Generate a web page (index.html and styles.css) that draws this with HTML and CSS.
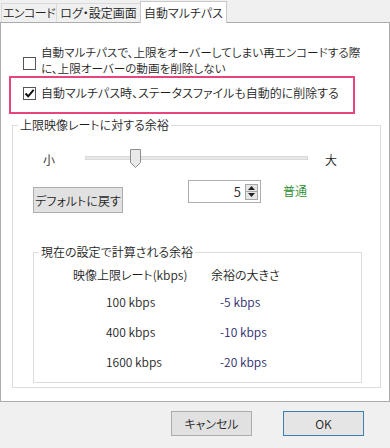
FILE: index.html
```html
<!DOCTYPE html>
<html lang="ja">
<head>
  <meta charset="UTF-8" />
  <title>自動マルチパス</title>
  <link rel="stylesheet" href="styles.css">
</head>
<body>
  <div class="window">
    <!-- Onglets -->
    <div class="tabs">
      <div class="tab tab-first">エンコード</div>
      <div class="tab tab-second">ログ・設定画面</div>
      <div class="tab tab-active">自動マルチパス</div>
    </div>

    <div class="panel">
      <div class="option option-multi">
        <span class="checkbox"></span>
        <span class="option-text">
          <span class="line">自動マルチパスで、上限をオーバーしてしまい再エンコードする際</span>
          <span class="line">に、上限オーバーの動画を削除しない</span>
        </span>
      </div>

      <div class="highlight">
        <div class="option">
          <span class="checkbox">
            <svg width="11" height="11" viewBox="0 0 11 11"><path d="M1.5 5.5 L4.2 8.3 L9.6 1.8" fill="none" stroke="#111" stroke-width="2"/></svg>
          </span>
          <span>自動マルチパス時、ステータスファイルも自動的に削除する</span>
        </div>
      </div>

      <fieldset class="group">
        <legend>上限映像レートに対する余裕</legend>

        <div class="slider-row">
          <span class="slider-label">小</span>
          <div class="slider-track">
            <svg class="slider-thumb" width="12" height="20" viewBox="0 0 12 20"><path d="M0.5 0.5 H10.5 V13.5 L5.5 18.5 L0.5 13.5 Z" fill="#e9e9e9" stroke="#8c8c8c"/></svg>
          </div>
          <span class="slider-label slider-max">大</span>
        </div>

        <div class="control-row">
          <button class="btn btn-reset">デフォルトに戻す</button>
          <div class="spinner">
            <span class="spinner-value">5</span>
            <span class="spinner-arrows">
              <span class="arrow"><svg width="7" height="4" viewBox="0 0 7 4"><path d="M0 4 L3.5 0 L7 4 Z" fill="#222"/></svg></span>
              <span class="arrow"><svg width="7" height="4" viewBox="0 0 7 4"><path d="M0 0 L3.5 4 L7 0 Z" fill="#222"/></svg></span>
            </span>
          </div>
          <span class="level">普通</span>
        </div>

        <fieldset class="group group-inner">
          <legend>現在の設定で計算される余裕</legend>
          <div class="rate-table">
            <div class="head">映像上限レート(kbps)</div>
            <div class="head">余裕の大きさ</div>
            <div class="rate">100 kbps</div>
            <div class="margin">-5 kbps</div>
            <div class="rate">400 kbps</div>
            <div class="margin">-10 kbps</div>
            <div class="rate">1600 kbps</div>
            <div class="margin">-20 kbps</div>
          </div>
        </fieldset>
      </fieldset>
    </div>

    <div class="footer">
      <button class="btn">キャンセル</button>
      <button class="btn btn-default">OK</button>
    </div>
  </div>
</body>
</html>
```

FILE: styles.css
```css
/* Fenêtre de dialogue */
html, body {
  margin: 0;
  padding: 0;
  background: #f0f0f0;
  font-family: "Noto Sans CJK JP", "Liberation Sans", sans-serif;
  font-size: 12px;
  font-weight: 350;
  font-feature-settings: "palt";
  color: #1e1e1e;
}

.window {
  width: 390px;
  height: 448px;
  display: flex;
  flex-direction: column;
}

/* Onglets */
.tabs {
  display: flex;
  align-items: flex-end;
  height: 22px;
  padding-left: 1px;
}
.tab {
  box-sizing: border-box;
  height: 19px;
  line-height: 18px;
  text-align: center;
  white-space: nowrap;
  border: 1px solid #d9d9d9;
  border-bottom: none;
  background: #f0f0f0;
  color: #222;
}
.tab-first { width: 56px; letter-spacing: -0.6px; }
.tab-second { width: 85px; margin-left: -1px; }
.tab-active {
  position: relative;
  z-index: 1;
  width: 87px;
  height: 22px;
  line-height: 21px;
  margin-bottom: -1px;
  margin-left: -1px;
  background: #fff;
  border-color: #c8c8c8;
}

.panel {
  box-sizing: border-box;
  height: 380px;
  background: #fff;
  border: 1px solid #acacac;
  padding-top: 21px;
}

/* Cases à cocher */
.option {
  display: flex;
  align-items: center;
  gap: 5px;
  line-height: 16px;
}
.option-multi {
  align-items: flex-start;
  margin-left: 22px;
}
.option-multi .checkbox {
  margin-top: 13px;
}
.option-text {
  display: flex;
  flex-direction: column;
}
.option-text .line {
  line-height: 16px;
  font-size: 11.6px;
}
.checkbox {
  box-sizing: border-box;
  width: 13px;
  height: 13px;
  flex-shrink: 0;
  border: 1px solid #555;
  background: #fff;
  display: flex;
  align-items: center;
  justify-content: center;
}

.highlight {
  box-sizing: border-box;
  width: 346px;
  height: 38px;
  margin: 0 0 0 8px;
  border: 2px solid #e8457c;
  padding: 7px 0 0 12px;
}

/* Groupes */
.group {
  margin: 3px 8px 0 11px;
  padding: 0;
  height: 271px;
  box-sizing: border-box;
  border: 1px solid #dcdcdc;
  min-width: 0;
}
.group legend {
  margin-left: 5px;
  padding: 0 2px;
  line-height: 16px;
}

.slider-row {
  display: flex;
  align-items: center;
  height: 20px;
  margin-top: 16px;
  padding-left: 30px;
}
.slider-label {
  width: 12px;
}
.slider-track {
  position: relative;
  box-sizing: border-box;
  width: 223px;
  height: 4px;
  margin-left: 30px;
  margin-top: -2px;
  background: #e7e7e7;
  border: 1px solid #d9d9d9;
}
.slider-thumb {
  position: absolute;
  left: 44px;
  top: -8px;
}
.slider-max {
  margin-left: 17px;
}

.control-row {
  display: flex;
  align-items: flex-start;
  margin-top: 11px;
  height: 33px;
}

.btn {
  box-sizing: border-box;
  width: 81px;
  height: 25px;
  padding: 0;
  font-family: inherit;
  font-size: 12px;
  font-weight: 350;
  font-feature-settings: "palt";
  color: #1e1e1e;
  background: #e1e1e1;
  border: 1px solid #adadad;
}
.btn-reset {
  width: 90px;
  height: 26px;
  margin: 7px 0 0 20px;
}
.btn-default {
  border-color: #3c7fb1;
  background: #e5e5e5;
}

.spinner {
  box-sizing: border-box;
  display: flex;
  align-items: center;
  justify-content: flex-end;
  width: 73px;
  height: 23px;
  margin-left: 65px;
  border: 1px solid #abadb3;
  padding-right: 2px;
}
.spinner-value {
  margin-right: 4px;
  font-size: 13px;
}
.spinner-arrows {
  display: flex;
  flex-direction: column;
  width: 13px;
}
.arrow {
  box-sizing: border-box;
  height: 8px;
  display: flex;
  align-items: center;
  justify-content: center;
  background: #e6e6e6;
  border: 1px solid #a8a8a8;
}
.arrow + .arrow {
  border-top: none;
}

.level {
  margin: 3px 0 0 22px;
  color: #1f8a2e;
  line-height: 16px;
}

/* Tableau des marges */
.group-inner {
  height: 139px;
  margin: 31px 18px 0 20px;
}
.rate-table {
  display: grid;
  grid-template-columns: 138px 1fr;
  grid-template-rows: 16px 27px 30px 30px;
  align-items: end;
  line-height: 16px;
  margin-top: 7px;
  padding-left: 39px;
}
.rate {
  padding-left: 33px;
}
.margin {
  padding-left: 9px;
  color: #2a2a6e;
}

.footer {
  display: flex;
  justify-content: flex-end;
  gap: 31px;
  padding: 9px 26px 0 0;
}
```
